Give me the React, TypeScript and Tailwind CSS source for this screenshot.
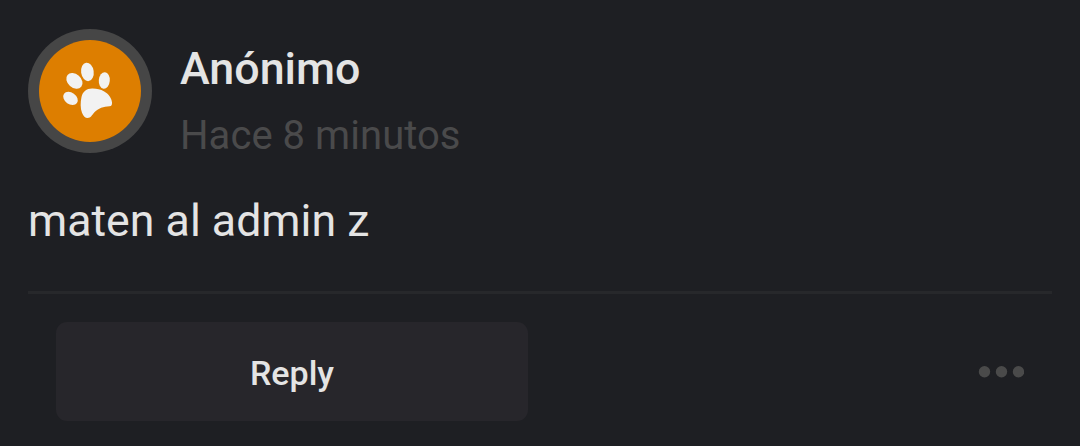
function PawIcon() {
  return (
    <svg viewBox="28 29 124 124" className="size-[124px] shrink-0" aria-hidden="true">
      <circle cx="90" cy="91" r="62" fill="#464646" />
      <circle cx="90" cy="91" r="51" fill="#dd7e00" />
      <g fill="#f2f2f2">
        <ellipse cx="74.4" cy="80.9" rx="9.1" ry="6.7" transform="rotate(41 74.4 80.9)" />
        <ellipse cx="87.4" cy="71.9" rx="6.3" ry="9.3" transform="rotate(-8 87.4 71.9)" />
        <ellipse cx="104.3" cy="80.5" rx="5.5" ry="8.3" transform="rotate(5 104.3 80.5)" />
        <ellipse cx="70.5" cy="98.4" rx="7.9" ry="5.8" transform="rotate(35 70.5 98.4)" />
        <path d="M92 88.6C86.5 88.8 82.8 91.5 81.5 97C80.3 102.5 80.3 108.5 82 112.7C83.3 116 85.3 118 87.6 118C90.8 118 92 115.2 94.2 112.6C98.5 107.8 103.5 106.8 109.5 106.2C111.5 106 112.2 105 112 102.5C111.6 97.8 108.5 93.8 104.2 91.4C100.5 89.4 96.5 88.5 92 88.6Z" />
      </g>
    </svg>
  );
}

export default function App() {
  return (
    <article className="flex h-[446px] w-[1080px] flex-col overflow-hidden bg-[#1e1f23] px-7 pt-[29px] font-['Roboto',sans-serif] text-[#e4e4e4]">
      <header className="flex h-[124px] gap-7">
        <PawIcon />
        <div className="flex flex-col gap-[17px] pt-[14px] whitespace-nowrap">
          <h2 className="text-[44.8px] leading-[52px] font-medium">Anónimo</h2>
          <time className="text-[40px] leading-[48px] tracking-[0.05px] text-[#4a4a4b]">Hace 8 minutos</time>
        </div>
      </header>
      <p className="mt-[42px] text-[44.7px] leading-[52px]">maten al admin z</p>
      <footer className="mt-[44px] flex items-start justify-between border-t-[3px] border-[#27282b] px-7 pt-7">
        <button className="flex h-[99px] w-[472px] items-center justify-center rounded-[11px] bg-[#27262b] pt-[3px] text-[34px] leading-10 font-medium">
          Reply
        </button>
        <button aria-label="Más opciones" className="flex h-[99px] items-center">
          <svg viewBox="0 0 46 12" className="h-3 w-[46px]" fill="#4a4a4a">
            <circle cx="6.5" cy="5.7" r="5.7" />
            <circle cx="23.5" cy="5.7" r="5.7" />
            <circle cx="40.5" cy="5.7" r="5.7" />
          </svg>
        </button>
      </footer>
    </article>
  );
}
